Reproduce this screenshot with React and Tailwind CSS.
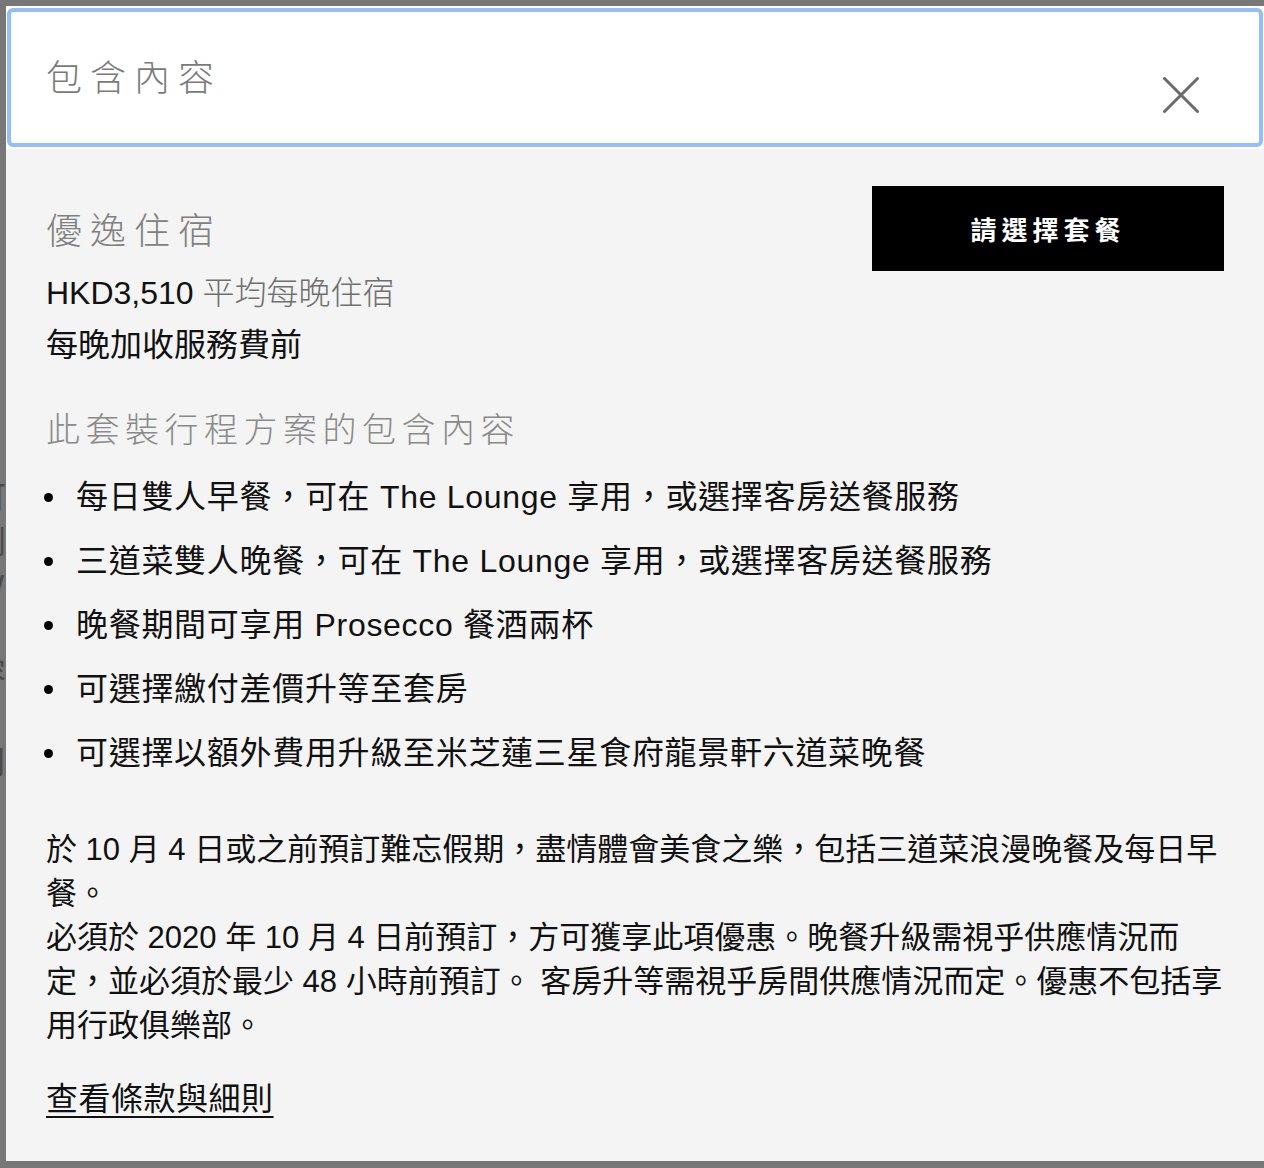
import React from 'react';

const FONT = { fontFamily: '"Liberation Sans", "Noto Sans CJK TC", sans-serif' };

const items = [
    '每日雙人早餐，可在 The Lounge 享用，或選擇客房送餐服務',
    '三道菜雙人晚餐，可在 The Lounge 享用，或選擇客房送餐服務',
    '晚餐期間可享用 Prosecco 餐酒兩杯',
    '可選擇繳付差價升等至套房',
    '可選擇以額外費用升級至米芝蓮三星食府龍景軒六道菜晚餐',
];

const CloseIcon = () => (
    <svg viewBox="0 0 36 36" className="w-[36px] h-[36px]" fill="none" stroke="#6b6b6b" strokeWidth="3" strokeLinecap="round">
        <line x1="1.5" y1="1.5" x2="34.5" y2="34.5" />
        <line x1="34.5" y1="1.5" x2="1.5" y2="34.5" />
    </svg>
);

export default function App() {
    return (
        <div className="w-[1264px] h-[1168px] bg-[#777777] pt-[6px] overflow-hidden flex" style={FONT}>
            {/* page behind the overlay, only a sliver shows */}
            <div className="w-[6px] shrink-0 overflow-hidden text-[#4a4a4a] text-[32px] leading-[44px]">
                <div className="ml-[-26px] mt-[470px] flex flex-col">
                    <span>可</span>
                    <span>劇</span>
                    <span>W</span>
                    <span className="mt-[44px]">容</span>
                    <span>/</span>
                    <span>用</span>
                    <span>:</span>
                </div>
            </div>

            <div className="flex-1 flex flex-col h-[1154px]">
                {/* header */}
                <div className="bg-white pt-[2px] pb-[2px] pl-[1px] pr-[1px]">
                    <div className="h-[139px] border-4 border-[#94bef6] rounded-[6px] flex items-start justify-between">
                        <h2 className="mt-[43px] ml-[35px] text-[36px] leading-[48px] tracking-[8px] font-light text-[#7a7a7a]">包含內容</h2>
                        <button className="mt-[65px] mr-[60px]">
                            <CloseIcon />
                        </button>
                    </div>
                </div>

                {/* body */}
                <div className="flex-1 bg-[#f4f4f4] pt-[37px] pl-[40px] pr-[40px] pb-[40px]">
                    <div className="flex items-start justify-between">
                        <div>
                            <h3 className="mt-[22px] text-[36px] leading-[48px] tracking-[8px] font-light text-[#808080]">優逸住宿</h3>
                            <p className="mt-[11px] text-[32px] leading-[52px]">
                                <span className="text-[#111111]">HKD3,510</span>{' '}
                                <span className="text-[#6f6f6f] font-light">平均每晚住宿</span>
                            </p>
                            <p className="text-[32px] leading-[52px] text-[#111111]">每晚加收服務費前</p>
                        </div>
                        <button className="w-[352px] h-[85px] pt-[5px] bg-black text-white text-[26px] font-bold tracking-[5px] flex items-center justify-center">
                            請選擇套餐
                        </button>
                    </div>

                    <h3 className="mt-[35px] text-[34px] leading-[48px] tracking-[5.5px] font-light text-[#8a8a8a]">此套裝行程方案的包含內容</h3>

                    <ul className="mt-[21px] flex flex-col gap-[20px]">
                        {items.map((t) => (
                            <li key={t} className="flex items-center text-[32px] leading-[44px] tracking-[0.7px] text-[#111111]">
                                <span className="w-[9px] h-[9px] rounded-full bg-black ml-[-2px] mr-[23px] shrink-0" />
                                {t}
                            </li>
                        ))}
                    </ul>

                    <div className="mt-[53px] text-[31px] leading-[44px] text-[#111111]">
                        <p>於 10 月 4 日或之前預訂難忘假期，盡情體會美食之樂，包括三道菜浪漫晚餐及每日早餐。</p>
                        <p>必須於 2020 年 10 月 4 日前預訂，方可獲享此項優惠。晚餐升級需視乎供應情況而定，並必須於最少 48 小時前預訂。 客房升等需視乎房間供應情況而定。優惠不包括享用行政俱樂部。</p>
                    </div>

                    <a className="mt-[29px] inline-block text-[32px] leading-[44px] tracking-[0.5px] text-[#111111] underline decoration-2 underline-offset-[6px]">查看條款與細則</a>
                </div>
            </div>
        </div>
    );
}
